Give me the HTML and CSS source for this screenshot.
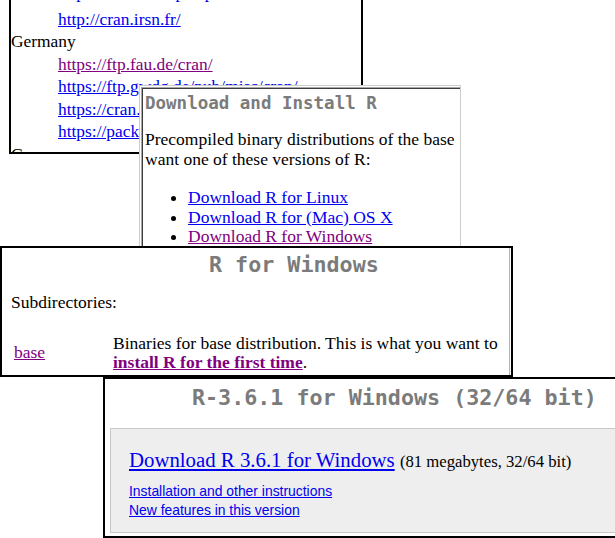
FILE: index.html
```html
<!DOCTYPE html>
<html>
<head>
<meta charset="utf-8">
<link rel="stylesheet" href="styles.css">
</head>
<body>
<div class="desk">
  <div class="win win1">
    <div class="mirrors">
      <a class="mlink lead" href="#">https://mirror.ibcp.fr/pub/CRAN/</a>
      <a class="mlink" href="#">http://cran.irsn.fr/</a>
      <div class="country">Germany</div>
      <a class="mlink visited" href="#">https://ftp.fau.de/cran/</a>
      <a class="mlink" href="#">https://ftp.gwdg.de/pub/misc/cran/</a>
      <a class="mlink" href="#">https://cran.uni-muenster.de/</a>
      <a class="mlink" href="#">https://packages.othr.de/cran/</a>
      <div class="country">Greece</div>
    </div>
  </div>

  <div class="win win2">
    <div class="frame">
      <h2 class="mono h-small">Download and Install R</h2>
      <p class="serif para">Precompiled binary distributions of the base<br>want one of these versions of R:</p>
      <ul class="serif dl-list">
        <li><a href="#">Download R for Linux</a></li>
        <li><a href="#">Download R for (Mac) OS X</a></li>
        <li><a class="visited" href="#">Download R for Windows</a></li>
      </ul>
    </div>
  </div>

  <div class="win win3">
    <h1 class="mono h-big h-win">R for Windows</h1>
    <div class="serif subdirs">Subdirectories:</div>
    <div class="serif dir-row">
      <a class="visited dir-name" href="#">base</a>
      <div class="dir-desc">Binaries for base distribution. This is what you want to<br><a class="visited strong" href="#">install R for the first time</a>.</div>
    </div>
  </div>

  <div class="win win4">
    <h1 class="mono h-big h-ver">R-3.6.1 for Windows (32/64 bit)</h1>
    <div class="dlbox">
      <div class="serif dl-main"><a class="big-link" href="#">Download R 3.6.1 for Windows</a> <span class="dl-size">(81 megabytes, 32/64 bit)</span></div>
      <div class="sans small-links">
        <a href="#">Installation and other instructions</a>
        <a href="#">New features in this version</a>
      </div>
    </div>
  </div>
</div>
</body>
</html>
```

FILE: styles.css
```css
html, body {
  margin: 0;
  padding: 0;
  background: #fff;
  overflow: hidden;
}

.desk {
  position: relative;
  width: 615px;
  height: 538px;
  overflow: hidden;
}

a {
  color: #0000ee;
  text-decoration: underline;
}

a.visited {
  color: #800080;
}

.serif {
  font-family: "Liberation Serif", "Times New Roman", serif;
  color: #000;
}

.sans {
  font-family: "Liberation Sans", Arial, sans-serif;
}

.mono {
  font-family: "DejaVu Sans Mono", monospace;
  font-weight: bold;
  color: #7b7b7b;
  margin: 0;
}

.win {
  position: absolute;
  box-sizing: border-box;
  background: #fff;
  overflow: hidden;
}

/* window 1: mirror list */
.win1 {
  left: 9px;
  top: -30px;
  width: 354px;
  height: 184px;
  border: 2px solid #000;
}

.mirrors {
  display: flex;
  flex-direction: column;
  align-items: flex-start;
  padding: 9px 0 0 0;
  font-family: "Liberation Serif", "Times New Roman", serif;
  font-size: 17.4px;
  line-height: 22.5px;
}

.mlink {
  margin-left: 47px;
  white-space: nowrap;
}

.mlink.lead {
  margin-bottom: 4px;
}

.country {
  color: #000;
}

/* window 2: download and install */
.win2 {
  left: 139px;
  top: 85px;
  width: 322px;
  height: 190px;
  border: 1px solid #cdcdcd;
  border-bottom: none;
  padding: 1px 0 0 1px;
}

.frame {
  height: 100%;
  border-top: 1px solid #a8a8a8;
  border-left: 1px solid #a8a8a8;
  box-shadow: inset 1px 1px 0 #3c3c3c;
  padding: 5px 0 0 3px;
  box-sizing: border-box;
}

.h-small {
  font-size: 17.5px;
  line-height: 20px;
}

.para {
  margin: 17px 0 0 0;
  font-size: 17.5px;
  line-height: 19.5px;
  white-space: nowrap;
}

.dl-list {
  margin: 19px 0 0 0;
  padding-left: 43px;
  font-size: 17.5px;
  line-height: 19.5px;
  white-space: nowrap;
}

/* window 3: R for Windows */
.win3 {
  left: 0;
  top: 246px;
  width: 513px;
  height: 131px;
  border: 2px solid #000;
  box-shadow: inset -1px 0 0 #fff, inset -2px 0 0 #b4b4b4;
}

.h-big {
  font-size: 21.7px;
  line-height: 26px;
}

.h-win {
  padding: 4px 0 0 207px;
}

.subdirs {
  margin-top: 15px;
  padding-left: 9px;
  font-size: 17.5px;
  line-height: 19.5px;
}

.dir-row {
  display: grid;
  grid-template-columns: 99px 1fr;
  align-items: center;
  margin-top: 21px;
  padding-left: 12px;
  font-size: 17.5px;
  line-height: 19px;
}

.dir-desc {
  white-space: nowrap;
}

.strong {
  font-weight: bold;
}

/* window 4: R-3.6.1 */
.win4 {
  left: 103px;
  top: 377px;
  width: 516px;
  height: 161px;
  border: 2px solid #000;
}

.h-ver {
  padding: 6px 0 0 87px;
  white-space: nowrap;
}

.dlbox {
  margin: 17px 0 0 5px;
  background: #eeeeee;
  border: 1px solid #c8c8c8;
  padding: 19px 0 12px 18px;
}

.dl-main {
  font-size: 20.8px;
  line-height: 24px;
  white-space: nowrap;
}

.dl-size {
  font-size: 16.7px;
}

.small-links {
  display: flex;
  flex-direction: column;
  align-items: flex-start;
  margin-top: 8px;
  font-size: 13.9px;
  line-height: 19px;
}
```
